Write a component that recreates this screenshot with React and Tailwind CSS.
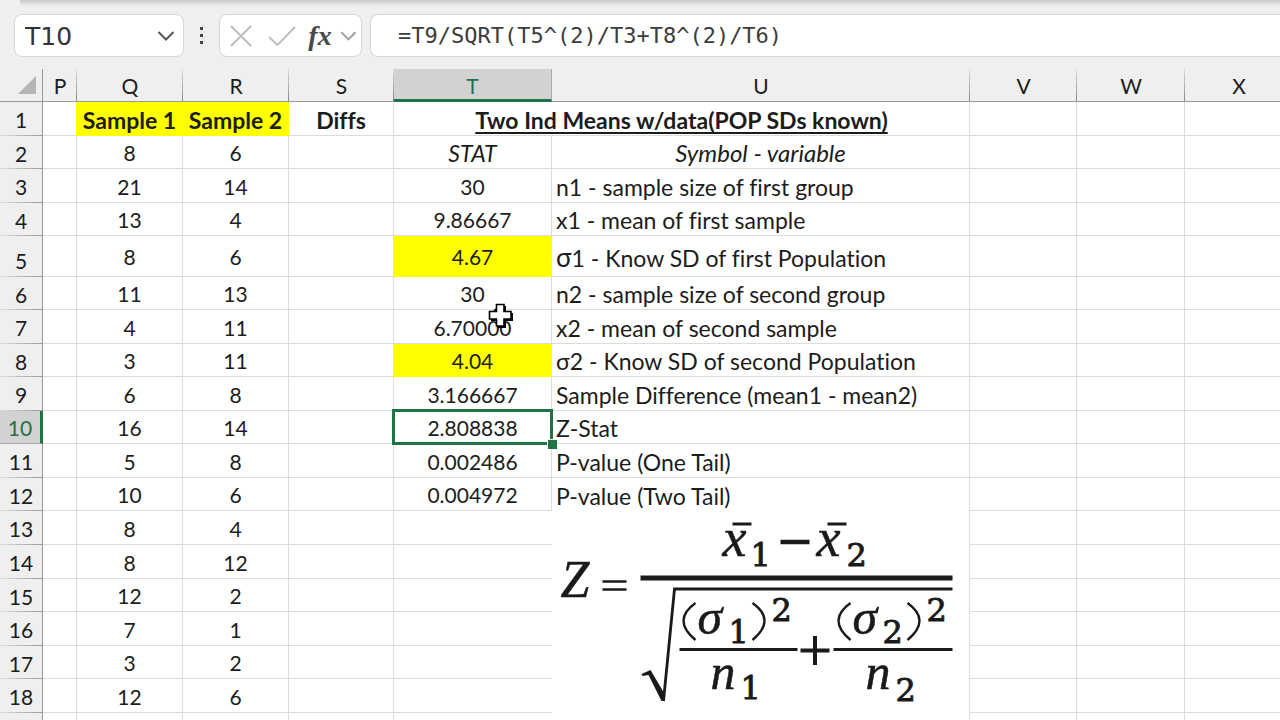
import React from "react";

const columns = [
  { name: "P", width: "w-[34px]" },
  { name: "Q", width: "w-[106px]" },
  { name: "R", width: "w-[106px]" },
  { name: "S", width: "w-[105px]" },
  { name: "T", width: "w-[158px]" },
  { name: "U", width: "w-[418px]" },
  { name: "V", width: "w-[107px]" },
  { name: "W", width: "w-[108px]" },
  { name: "X", width: "w-[108px]" },
];

const rows = [
  { q: "Sample 1", r: "Sample 2", s: "Diffs", height: "h-[34px]" },
  { q: 8, r: 6, t: "STAT", u: "Symbol - variable", height: "h-[33px]" },
  { q: 21, r: 14, t: "30", u: "n1 - sample size of first group", height: "h-[34px]" },
  { q: 13, r: 4, t: "9.86667", u: "x1 - mean of first sample", height: "h-[33px]" },
  { q: 8, r: 6, t: "4.67", u: "1 - Know SD of first Population", sigma: "text-[26px]", known: true, height: "h-[41px]" },
  { q: 11, r: 13, t: "30", u: "n2 - sample size of second group", height: "h-[33px]" },
  { q: 4, r: 11, t: "6.70000", u: "x2 - mean of second sample", height: "h-[34px]" },
  { q: 3, r: 11, t: "4.04", u: "2 - Know SD of second Population", sigma: "text-[23px]", known: true, height: "h-[33px]" },
  { q: 6, r: 8, t: "3.166667", u: "Sample Difference (mean1 - mean2)", height: "h-[34px]" },
  { q: 16, r: 14, t: "2.808838", u: "Z-Stat", height: "h-[33px]" },
  { q: 5, r: 8, t: "0.002486", u: "P-value (One Tail)", height: "h-[34px]" },
  { q: 10, r: 6, t: "0.004972", u: "P-value (Two Tail)", height: "h-[33px]" },
  { q: 8, r: 4, height: "h-[34px]" },
  { q: 8, r: 12, height: "h-[34px]" },
  { q: 12, r: 2, height: "h-[33px]" },
  { q: 7, r: 1, height: "h-[34px]" },
  { q: 3, r: 2, height: "h-[33px]" },
  { q: 12, r: 6, height: "h-[34px]" },
];

const grid = "border-r border-b border-[#dcdcdc] p-0 pt-0.5";
const yellow = "border-r border-b border-[#ffff00] bg-[#ffff00] p-0 pt-0.5 shadow-[-1px_0_0_#ffff00]";
const rowHead =
  "border-r border-[#999] bg-[#efefef] bg-[linear-gradient(to_right,#dddddd,#999999)] bg-[length:100%_1px] bg-bottom bg-no-repeat p-0 pt-0.5 font-normal";

const Chevron = ({ className }) => (
  <svg className={className} viewBox="0 0 18 12" fill="none" stroke="currentColor" strokeWidth="2">
    <path d="M1.5 2 L9 9.5 L16.5 2" />
  </svg>
);

const FormulaBar = () => (
  <div className="flex h-[43px] items-stretch pl-3.5">
    <div className="flex w-[170px] items-center rounded-lg border border-[#d6d6d6] bg-white pr-2 pl-2.5">
      <input
        aria-label="Name box"
        defaultValue="T10"
        className="w-full min-w-0 bg-transparent pt-0.5 font-['DejaVu_Sans'] text-[25px] text-[#333] outline-none"
      />
      <button aria-label="Show names" className="text-[#555]">
        <Chevron className="h-3 w-[18px]" />
      </button>
    </div>
    <div className="flex w-[35px] flex-col items-center justify-center gap-1">
      <span className="size-[3px] bg-[#444]" />
      <span className="size-[3px] bg-[#444]" />
      <span className="size-[3px] bg-[#444]" />
    </div>
    <div className="flex w-[143px] items-center rounded-lg border border-[#d6d6d6] bg-white pl-2.5">
      <button aria-label="Cancel" className="text-[#bcbcbc]">
        <svg className="size-[22px]" viewBox="0 0 22 22" fill="none" stroke="currentColor" strokeWidth="1.8">
          <path d="M1 1 L21 21 M21 1 L1 21" />
        </svg>
      </button>
      <button aria-label="Enter" className="ml-4 text-[#bcbcbc]">
        <svg className="h-[22px] w-7" viewBox="0 0 28 22" fill="none" stroke="currentColor" strokeWidth="1.8">
          <path d="M1 12 L9.5 20 L27 2" />
        </svg>
      </button>
      <button
        aria-label="Insert function"
        className="ml-3 w-6 font-['Liberation_Serif'] text-[28px] leading-8 font-bold text-[#4a4a4a] italic"
      >
        fx
      </button>
      <button aria-label="Function list" className="ml-2 text-[#a0a0a0]">
        <Chevron className="h-3 w-[17px]" />
      </button>
    </div>
    <div className="ml-2 flex flex-1 items-center rounded-l-lg border border-r-0 border-[#d6d6d6] bg-white pl-[27px]">
      <input
        aria-label="Formula"
        defaultValue="=T9/SQRT(T5^(2)/T3+T8^(2)/T6)"
        className="w-full bg-transparent font-['DejaVu_Sans_Mono'] text-[22px] text-[#3c3c3c] outline-none"
      />
    </div>
  </div>
);

// z statistic for two independent means
const ZFormula = () => (
  <svg
    className="block h-[202px] w-full font-['Liberation_Serif']"
    viewBox="552 511 416 202"
    fill="#1a1a1a"
    stroke="none"
    role="img"
    aria-label="Z formula"
  >
    <g fontSize="50" fontStyle="italic" stroke="#1a1a1a" strokeWidth="0.5">
      <text x="560" y="597" fontSize="52">Z</text>
      <text x="722" y="556" fontSize="54">x</text>
      <text x="816" y="556" fontSize="54">x</text>
      <text x="697" y="634">σ</text>
      <text x="852" y="634">σ</text>
      <text x="710" y="689">n</text>
      <text x="865" y="689">n</text>
    </g>
    <g fontSize="32" stroke="#1a1a1a" strokeWidth="0.9" className="font-['DejaVu_Serif']">
      <text x="750" y="566">1</text>
      <text x="846" y="566">2</text>
      <text x="728" y="643">1</text>
      <text x="882" y="643">2</text>
      <text x="771" y="621">2</text>
      <text x="926" y="621">2</text>
      <text x="740" y="699">1</text>
      <text x="895" y="701">2</text>
    </g>
    <g fill="none" stroke="#1a1a1a" strokeWidth="2.4">
      <path d="M695 603 Q671 620 695 640" />
      <path d="M752 603 Q776 620 752 640" />
      <path d="M850 603 Q826 620 850 640" />
      <path d="M907 603 Q931 620 907 640" />
      <path d="M732 524 H751 M827 524 H846" strokeWidth="3" />
      <path d="M602 581.5 H626 M602 589.5 H626" strokeWidth="2.6" />
      <path d="M780 542 H809" strokeWidth="4.5" />
      <path d="M640 578 H952" strokeWidth="5" />
      <path d="M663 701 L674 589 H952" strokeWidth="2.8" />
      <path d="M679 649.5 H797 M833 649.5 H952" strokeWidth="2.8" />
      <path d="M800 650.5 H829 M814.5 636 V665" strokeWidth="4" />
    </g>
    <path d="M641 674 L650 670 L663 692 L664 701 L661 701 L648 675 L642 676 Z" />
  </svg>
);

const Cursor = () => (
  <svg className="absolute -top-[7px] left-[94px] z-10 size-[26px]" viewBox="0 0 26 26">
    <path d="M10 3 H18 V10 H25 V18 H18 V25 H10 V18 H3 V10 Z" fill="#000" />
    <path d="M8.5 1.5 H16 V8.5 H23 V16 H16 V23 H8.5 V16 H1.5 V8.5 H8.5 Z" fill="#fff" stroke="#000" strokeWidth="1.6" />
  </svg>
);

const Selection = () => (
  <>
    <span className="absolute -inset-x-0.5 -inset-y-0.5 z-10 border-3 border-[#217346]" />
    <span className="absolute -right-1.5 -bottom-1.5 z-10 size-[10px] border-t border-l border-white bg-[#217346]" />
  </>
);

const StatCells = ({ row, number }) => {
  if (number === 1) {
    return (
      <td
        colSpan={2}
        className={`${grid} text-[23px] font-bold underline decoration-2 underline-offset-3 [text-decoration-skip-ink:none]`}
      >
        Two Ind Means w/data(POP SDs known)
      </td>
    );
  }
  if (number > 13) return <td className="border-b border-[#dcdcdc] p-0" />;
  if (number === 13) {
    return (
      <>
        <td className="border-b border-[#dcdcdc] p-0" />
        <td rowSpan={7} className="border-r border-[#dcdcdc] bg-white p-0 align-top">
          <ZFormula />
        </td>
      </>
    );
  }
  return (
    <>
      <td className={`relative ${row.known ? yellow : grid} ${number === 2 ? "text-[23px] italic" : ""}`}>
        {row.t}
        {number === 7 && <Cursor />}
        {number === 10 && <Selection />}
      </td>
      <td
        className={
          number === 2
            ? `${grid} text-2xl leading-6 italic`
            : `${number === 12 ? "border-r border-[#dcdcdc] p-0 pt-0.5" : grid} pl-1 text-left text-[23px]`
        }
      >
        {row.sigma && <span className={`${row.sigma} leading-6`}>σ</span>}
        {row.u}
      </td>
    </>
  );
};

const Sheet = () => (
  <table className="w-full table-fixed border-separate border-spacing-0 bg-white text-center text-[21px] leading-6 whitespace-nowrap text-[#1c1c1c] [font-variant-ligatures:none]">
    <colgroup>
      <col className="w-[43px]" />
      {columns.map((col) => (
        <col key={col.name} className={col.width} />
      ))}
    </colgroup>
    <thead>
      <tr className="h-[33px] bg-[#efefef]">
        <td className="border-r border-b border-[#999] p-0">
          <svg className="ml-4 h-5 w-[22px]" viewBox="0 0 22 20" fill="#b5b5b5">
            <path d="M20 1 V19 H2 Z" />
          </svg>
        </td>
        {columns.map((col) => (
          <th
            key={col.name}
            scope="col"
            className={
              col.name === "T"
                ? "border-r border-b-3 border-r-[#aaa] border-b-[#217346] bg-[#d2d2d2] p-0 pt-1 font-normal text-[#217346]"
                : "border-b border-[#999] bg-[linear-gradient(to_bottom,#dddddd,#888888)] bg-[length:1px_100%] bg-right bg-no-repeat p-0 pt-0.5 font-normal"
            }
          >
            {col.name}
          </th>
        ))}
      </tr>
    </thead>
    <tbody>
      {rows.map((row, i) => {
        const number = i + 1;
        return (
          <tr key={number} className={row.height}>
            <th
              scope="row"
              className={
                number === 10
                  ? "border-r-3 border-b border-r-[#217346] border-b-[#aaa] bg-[#d2d2d2] p-0 pt-0.5 font-normal text-[#217346]"
                  : `${rowHead} ${number === 5 ? "pb-1 align-bottom" : ""}`
              }
            >
              {number}
            </th>
            <td className={grid} />
            <td className={number === 1 ? `${yellow} text-[23px] font-bold` : grid}>{row.q}</td>
            <td className={number === 1 ? `${yellow} text-[23px] font-bold` : grid}>{row.r}</td>
            <td className={`${grid} text-[23px] font-bold`}>{row.s}</td>
            <StatCells row={row} number={number} />
            <td className={grid} />
            <td className={grid} />
            <td className={grid} />
          </tr>
        );
      })}
      {/* sliver of the next row */}
      <tr className="h-[34px]">
        <td className={rowHead} />
        <td className={grid} />
        <td className={grid} />
        <td className={grid} />
        <td className={grid} />
        <td className="p-0" />
        <td className={grid} />
        <td className={grid} />
        <td className={grid} />
      </tr>
    </tbody>
  </table>
);

export default function App() {
  return (
    <div className="h-screen overflow-hidden bg-[#efefef] font-['Lato','Noto_Sans',sans-serif]">
      <div className="h-3.5 pl-5">
        <div className="h-1.5 bg-linear-to-b from-[#c8c8c8] to-[#efefef]" />
      </div>
      <FormulaBar />
      <div className="mt-3 overflow-hidden">
        <Sheet />
      </div>
    </div>
  );
}
